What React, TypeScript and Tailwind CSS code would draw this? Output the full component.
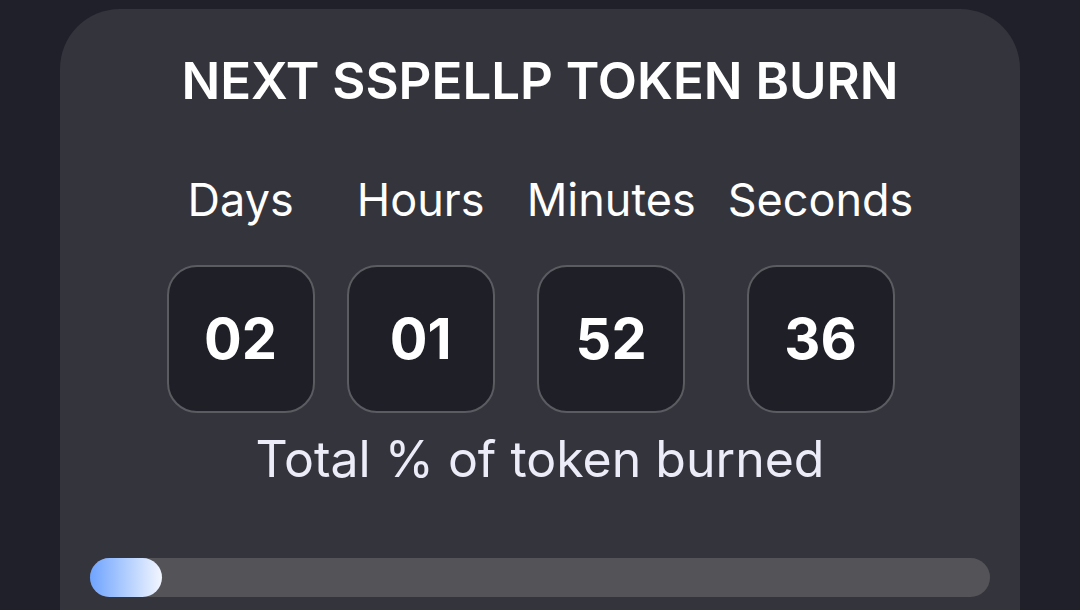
export default function App() {
  const units = [
    { label: "Days", value: "02" },
    { label: "Hours", value: "01" },
    { label: "Minutes", value: "52" },
    { label: "Seconds", value: "36" },
  ];

  return (
    <div className="h-[610px] w-[1080px] overflow-hidden bg-[#1f2029] px-[60px] pt-[9px] font-['Inter',sans-serif]">
      <div className="h-[700px] rounded-[60px] bg-[#34343c] px-[30px] pt-[46px]">
        <h1 className="text-center text-[51px] font-semibold leading-none text-white">
          NEXT SSPELLP TOKEN BURN
        </h1>

        {/* countdown */}
        <div className="mt-[71px] flex justify-center gap-8">
          {units.map((u) => (
            <div key={u.label} className="flex flex-col items-center">
              <span className="text-[45px] leading-none text-white">{u.label}</span>
              <div className="mt-[43px] flex h-[148px] w-[148px] items-center justify-center rounded-[30px] border-2 border-[#5b5b62] bg-[#1f2027]">
                <span className="text-[56px] font-bold leading-none text-white">{u.value}</span>
              </div>
            </div>
          ))}
        </div>

        <p className="mt-[21px] text-center text-[50px] leading-none text-[#ececf8]">
          Total % of token burned
        </p>

        <div className="mt-[74px] h-[39px] rounded-full bg-[#535358]">
          <div className="h-full w-[72px] rounded-full bg-gradient-to-r from-[#6fa3ff] to-[#f3f6ff]" />
        </div>
      </div>
    </div>
  );
}
